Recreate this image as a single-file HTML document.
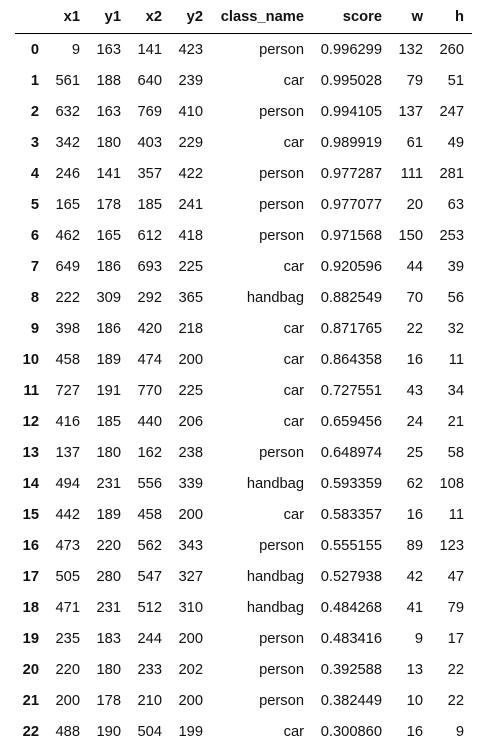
<!DOCTYPE html>
<html><head><meta charset="utf-8"><style>
html,body{margin:0;padding:0;background:#fff;}
body{width:483px;height:756px;overflow:hidden;}
table{position:absolute;left:15px;top:1px;border-collapse:collapse;table-layout:fixed;font-family:"Liberation Sans",Arial,sans-serif;font-size:14.7px;color:#111;}
td,th{padding:0;text-align:right;white-space:nowrap;}
thead th{height:32px;border-bottom:1px solid #000;font-weight:bold;}
tbody td,tbody th{height:31px;}
tbody th{font-weight:bold;}
td:last-child,th:last-child{padding-right:8px;}
</style></head><body>
<table>
<colgroup><col style="width:24px"><col style="width:41px"><col style="width:41px"><col style="width:41px"><col style="width:41px"><col style="width:101px"><col style="width:78px"><col style="width:41px"><col style="width:49px"></colgroup>
<thead><tr><th></th><th>x1</th><th>y1</th><th>x2</th><th>y2</th><th>class_name</th><th>score</th><th>w</th><th>h</th></tr></thead>
<tbody>
<tr><th>0</th><td>9</td><td>163</td><td>141</td><td>423</td><td>person</td><td>0.996299</td><td>132</td><td>260</td></tr>
<tr><th>1</th><td>561</td><td>188</td><td>640</td><td>239</td><td>car</td><td>0.995028</td><td>79</td><td>51</td></tr>
<tr><th>2</th><td>632</td><td>163</td><td>769</td><td>410</td><td>person</td><td>0.994105</td><td>137</td><td>247</td></tr>
<tr><th>3</th><td>342</td><td>180</td><td>403</td><td>229</td><td>car</td><td>0.989919</td><td>61</td><td>49</td></tr>
<tr><th>4</th><td>246</td><td>141</td><td>357</td><td>422</td><td>person</td><td>0.977287</td><td>111</td><td>281</td></tr>
<tr><th>5</th><td>165</td><td>178</td><td>185</td><td>241</td><td>person</td><td>0.977077</td><td>20</td><td>63</td></tr>
<tr><th>6</th><td>462</td><td>165</td><td>612</td><td>418</td><td>person</td><td>0.971568</td><td>150</td><td>253</td></tr>
<tr><th>7</th><td>649</td><td>186</td><td>693</td><td>225</td><td>car</td><td>0.920596</td><td>44</td><td>39</td></tr>
<tr><th>8</th><td>222</td><td>309</td><td>292</td><td>365</td><td>handbag</td><td>0.882549</td><td>70</td><td>56</td></tr>
<tr><th>9</th><td>398</td><td>186</td><td>420</td><td>218</td><td>car</td><td>0.871765</td><td>22</td><td>32</td></tr>
<tr><th>10</th><td>458</td><td>189</td><td>474</td><td>200</td><td>car</td><td>0.864358</td><td>16</td><td>11</td></tr>
<tr><th>11</th><td>727</td><td>191</td><td>770</td><td>225</td><td>car</td><td>0.727551</td><td>43</td><td>34</td></tr>
<tr><th>12</th><td>416</td><td>185</td><td>440</td><td>206</td><td>car</td><td>0.659456</td><td>24</td><td>21</td></tr>
<tr><th>13</th><td>137</td><td>180</td><td>162</td><td>238</td><td>person</td><td>0.648974</td><td>25</td><td>58</td></tr>
<tr><th>14</th><td>494</td><td>231</td><td>556</td><td>339</td><td>handbag</td><td>0.593359</td><td>62</td><td>108</td></tr>
<tr><th>15</th><td>442</td><td>189</td><td>458</td><td>200</td><td>car</td><td>0.583357</td><td>16</td><td>11</td></tr>
<tr><th>16</th><td>473</td><td>220</td><td>562</td><td>343</td><td>person</td><td>0.555155</td><td>89</td><td>123</td></tr>
<tr><th>17</th><td>505</td><td>280</td><td>547</td><td>327</td><td>handbag</td><td>0.527938</td><td>42</td><td>47</td></tr>
<tr><th>18</th><td>471</td><td>231</td><td>512</td><td>310</td><td>handbag</td><td>0.484268</td><td>41</td><td>79</td></tr>
<tr><th>19</th><td>235</td><td>183</td><td>244</td><td>200</td><td>person</td><td>0.483416</td><td>9</td><td>17</td></tr>
<tr><th>20</th><td>220</td><td>180</td><td>233</td><td>202</td><td>person</td><td>0.392588</td><td>13</td><td>22</td></tr>
<tr><th>21</th><td>200</td><td>178</td><td>210</td><td>200</td><td>person</td><td>0.382449</td><td>10</td><td>22</td></tr>
<tr><th>22</th><td>488</td><td>190</td><td>504</td><td>199</td><td>car</td><td>0.300860</td><td>16</td><td>9</td></tr>
</tbody></table>
</body></html>
